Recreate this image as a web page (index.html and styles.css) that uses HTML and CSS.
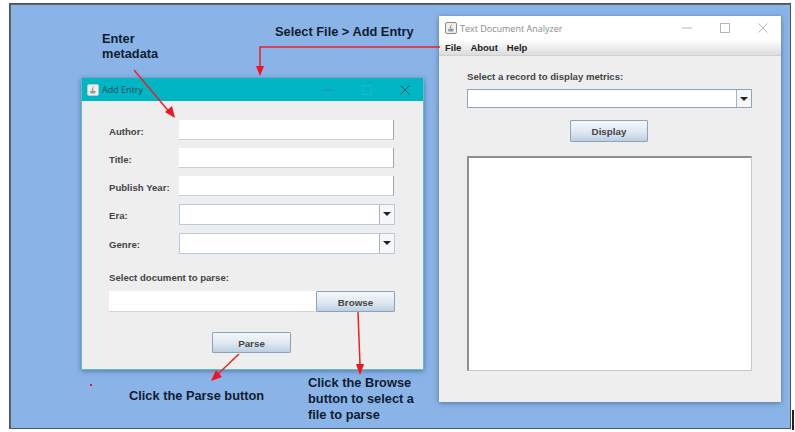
FILE: index.html
```html
<!DOCTYPE html>
<html lang="en">
<head>
    <meta charset="UTF-8">
    <meta name="viewport" content="width=device-width, initial-scale=1.0">
    <title>Add Entry walkthrough</title>
    <link rel="stylesheet" href="styles.css">
</head>
<body>
    <div class="desktop">
        <div class="window add-entry">
            <div class="titlebar teal">
                <svg class="app-icon" viewBox="0 0 12 12"><rect x="0.5" y="0.5" width="11" height="11" rx="1.5" fill="#eef1f2" stroke="#b9c9cc"/><path d="M6.300 1.800 C7.600 3.400 5.400 4 6.500 5.800 L8 6.400 H4.200 L5 5.600 C4.300 4 6.600 3.400 6.300 1.800 Z" fill="#e0803a"/><path d="M2.800 7 H8.800 L8 9.600 H3.600 Z" fill="#7d9fc0"/></svg>
                <span class="window-title">Add Entry</span>
                <div class="window-buttons">
                    <svg viewBox="0 0 10 10"><path d="M0 5 H10" stroke="#2f8f9c"/></svg>
                    <svg viewBox="0 0 10 10"><rect x="0.5" y="0.5" width="9" height="9" fill="none" stroke="#19b9c6"/></svg>
                    <svg viewBox="0 0 10 10"><path d="M0.5 0.5 L9.5 9.5 M9.5 0.5 L0.5 9.5" stroke="#1d5560"/></svg>
                </div>
            </div>
            <div class="entry-form">
                <div class="field-grid">
                    <label>Author:</label>
                    <div class="text-input"></div>
                    <label>Title:</label>
                    <div class="text-input"></div>
                    <label>Publish Year:</label>
                    <div class="text-input"></div>
                    <label>Era:</label>
                    <div class="combo"><div class="combo-arrow"></div></div>
                    <label>Genre:</label>
                    <div class="combo"><div class="combo-arrow"></div></div>
                </div>
                <label class="doc-label">Select document to parse:</label>
                <div class="browse-row">
                    <div class="path-input"></div>
                    <button class="swing-button">Browse</button>
                </div>
                <button class="swing-button parse-button">Parse</button>
            </div>
        </div>

        <div class="window analyzer">
            <div class="titlebar">
                <svg class="app-icon" viewBox="0 0 12 12"><rect x="0.5" y="0.5" width="11" height="11" rx="1.5" fill="#eef1f2" stroke="#8d8d8d"/><path d="M6.300 1.800 C7.600 3.400 5.400 4 6.500 5.800 L8 6.400 H4.200 L5 5.600 C4.300 4 6.600 3.400 6.300 1.800 Z" fill="#e0803a"/><path d="M2.800 7 H8.800 L8 9.600 H3.600 Z" fill="#7d9fc0"/></svg>
                <span class="window-title faded">Text Document Analyzer</span>
                <div class="window-buttons">
                    <svg viewBox="0 0 10 10"><path d="M0 5 H10" stroke="#b5b5b5"/></svg>
                    <svg viewBox="0 0 10 10"><rect x="0.5" y="0.5" width="9" height="9" fill="none" stroke="#b5b5b5"/></svg>
                    <svg viewBox="0 0 10 10"><path d="M0.5 0.5 L9.5 9.5 M9.5 0.5 L0.5 9.5" stroke="#b5b5b5"/></svg>
                </div>
            </div>
            <div class="menubar">
                <span>File</span>
                <span>About</span>
                <span>Help</span>
            </div>
            <div class="metrics">
                <label>Select a record to display metrics:</label>
                <div class="combo metrics-combo"><div class="combo-arrow"></div></div>
                <button class="swing-button display-button">Display</button>
                <div class="metrics-output"></div>
            </div>
        </div>

        <svg class="arrows" viewBox="0 0 795 432">
            <g stroke="#e8202a" stroke-width="1.5" fill="none">
                <path d="M134 70 L171 114"/>
                <path d="M440 47 H260 V70"/>
                <path d="M358 312 L360 365"/>
                <path d="M239 354 L218 374"/>
            </g>
            <g fill="#f0141e">
                <path d="M175 118 L165 112 L172 106 Z"/>
                <path d="M260 76 L256 66 L264 66 Z"/>
                <path d="M360 375 L356 364 L364 364 Z"/>
                <path d="M211 381 L216 370 L222 377 Z"/>
                <rect x="90" y="384" width="2" height="2"/>
            </g>
        </svg>

        <div class="note note-metadata">Enter<br>metadata</div>
        <div class="note note-file">Select File &gt; Add Entry</div>
        <div class="note note-parse">Click the Parse button</div>
        <div class="note note-browse">Click the Browse<br>button to select a<br>file to parse</div>
    </div>
    <div class="corner-mark"></div>
</body>
</html>
```

FILE: styles.css
```css
* {
    box-sizing: border-box;
}

body {
    margin: 0;
    width: 795px;
    height: 432px;
    position: relative;
    overflow: hidden;
    background-color: #fff;
    font-family: 'Liberation Sans', Arial, sans-serif;
}

.desktop {
    position: absolute;
    left: 9px;
    top: 3px;
    width: 782px;
    height: 426px;
    background-color: #8ab4e8;
    border: 1px solid #4d5560;
    box-shadow: inset 1px 1px 0 #5d6670;
}

.corner-mark {
    position: absolute;
    left: 792px;
    top: 410px;
    width: 2px;
    height: 20px;
    background-color: #222;
}

.window {
    position: absolute;
    display: flex;
    flex-direction: column;
    background-color: #eeeeee;
    box-shadow: 0 1px 5px rgba(40, 60, 90, 0.55);
}

.add-entry {
    left: 71px;
    top: 74px;
    width: 343px;
    height: 292px;
    border: 1px solid #62bcc8;
    border-top: 0;
}

.analyzer {
    left: 429px;
    top: 12px;
    width: 342px;
    height: 386px;
}

.titlebar {
    display: flex;
    align-items: center;
    height: 24px;
    padding-left: 6px;
    background-color: #fff;
    flex-shrink: 0;
}

.titlebar.teal {
    height: 23px;
    padding-left: 5px;
    background-color: #00b5c4;
}

.app-icon {
    width: 12px;
    height: 12px;
    margin-right: 3px;
}

.window-title {
    font-family: 'Open Sans', sans-serif;
    font-size: 9px;
    color: #14505c;
}

.window-title.faded {
    color: #8a8a8a;
}

.window-buttons {
    display: flex;
    align-items: center;
    gap: 28px;
    margin-left: auto;
    padding-right: 13px;
}

.window-buttons svg {
    width: 10px;
    height: 10px;
}

.entry-form {
    display: flex;
    flex-direction: column;
    padding: 19px 28px 0 27px;
}

label {
    font-size: 9.600px;
    font-weight: bold;
    color: #444;
}

.field-grid {
    display: grid;
    grid-template-columns: 70px 216px;
    grid-template-rows: 20px 20px 20px 21px 21px;
    row-gap: 8px;
    align-items: center;
}

.field-grid label {
    padding-top: 2px;
}

.text-input {
    width: 215px;
    height: 20px;
    background-color: #fff;
    border-right: 1px solid #9aa5ad;
    border-bottom: 1px solid #c6d0da;
}

.combo {
    position: relative;
    height: 21px;
    background-color: #fff;
    border: 1px solid #b8cbdc;
    width: 216px;
}

.combo-arrow {
    position: absolute;
    right: 0;
    top: 0;
    bottom: 0;
    width: 15px;
    background-color: #f6f7f8;
    border-left: 1px solid #a8b4c0;
}

.combo-arrow::after {
    content: "";
    position: absolute;
    left: 3px;
    top: 7px;
    border-left: 4px solid transparent;
    border-right: 4px solid transparent;
    border-top: 4px solid #222;
}

.doc-label {
    margin-top: 18px;
}

.browse-row {
    display: flex;
    width: 286px;
    margin-top: 8px;
}

.path-input {
    width: 207px;
    height: 21px;
    background-color: #fff;
    border-bottom: 1px solid #cdd6e0;
}

.swing-button {
    width: 79px;
    height: 21px;
    padding: 1px 0 0;
    font-family: inherit;
    font-size: 9.800px;
    font-weight: bold;
    color: #444;
    background: linear-gradient(#f4f7fa, #dfe8f1 55%, #bccfe2);
    border: 1px solid #8fa3b6;
    border-radius: 1px;
}

.parse-button {
    margin: 20px 0 0 103px;
}

.menubar {
    display: flex;
    align-items: center;
    gap: 9px;
    height: 16px;
    padding-left: 6px;
    flex-shrink: 0;
    font-size: 9.500px;
    font-weight: bold;
    color: #222;
    background: linear-gradient(#ffffff, #dcdcdc);
    border-bottom: 1px solid #cfcfcf;
}

.metrics {
    display: flex;
    flex-direction: column;
    align-items: flex-start;
    padding: 15px 29px 0 28px;
}

.metrics-combo {
    width: 285px;
    height: 19px;
    margin-top: 7px;
    border-color: #8ea4b8;
}

.display-button {
    width: 78px;
    height: 22px;
    margin: 12px 0 0 103px;
}

.metrics-output {
    width: 285px;
    height: 215px;
    margin-top: 14px;
    background-color: #fff;
    border: 1px solid #c4c9cf;
    border-top: 2px solid #8c9196;
    border-left: 2px solid #8c9196;
}

.arrows {
    position: absolute;
    left: -10px;
    top: -4px;
    width: 795px;
    height: 432px;
    pointer-events: none;
}

.note {
    position: absolute;
    font-size: 12.800px;
    font-weight: bold;
    line-height: 16px;
    color: #101c30;
    white-space: nowrap;
}

.note-metadata {
    left: 92px;
    top: 27px;
    line-height: 15px;
}

.note-file {
    left: 265px;
    top: 20px;
}

.note-parse {
    left: 119px;
    top: 384px;
}

.note-browse {
    left: 298px;
    top: 371px;
}
```
